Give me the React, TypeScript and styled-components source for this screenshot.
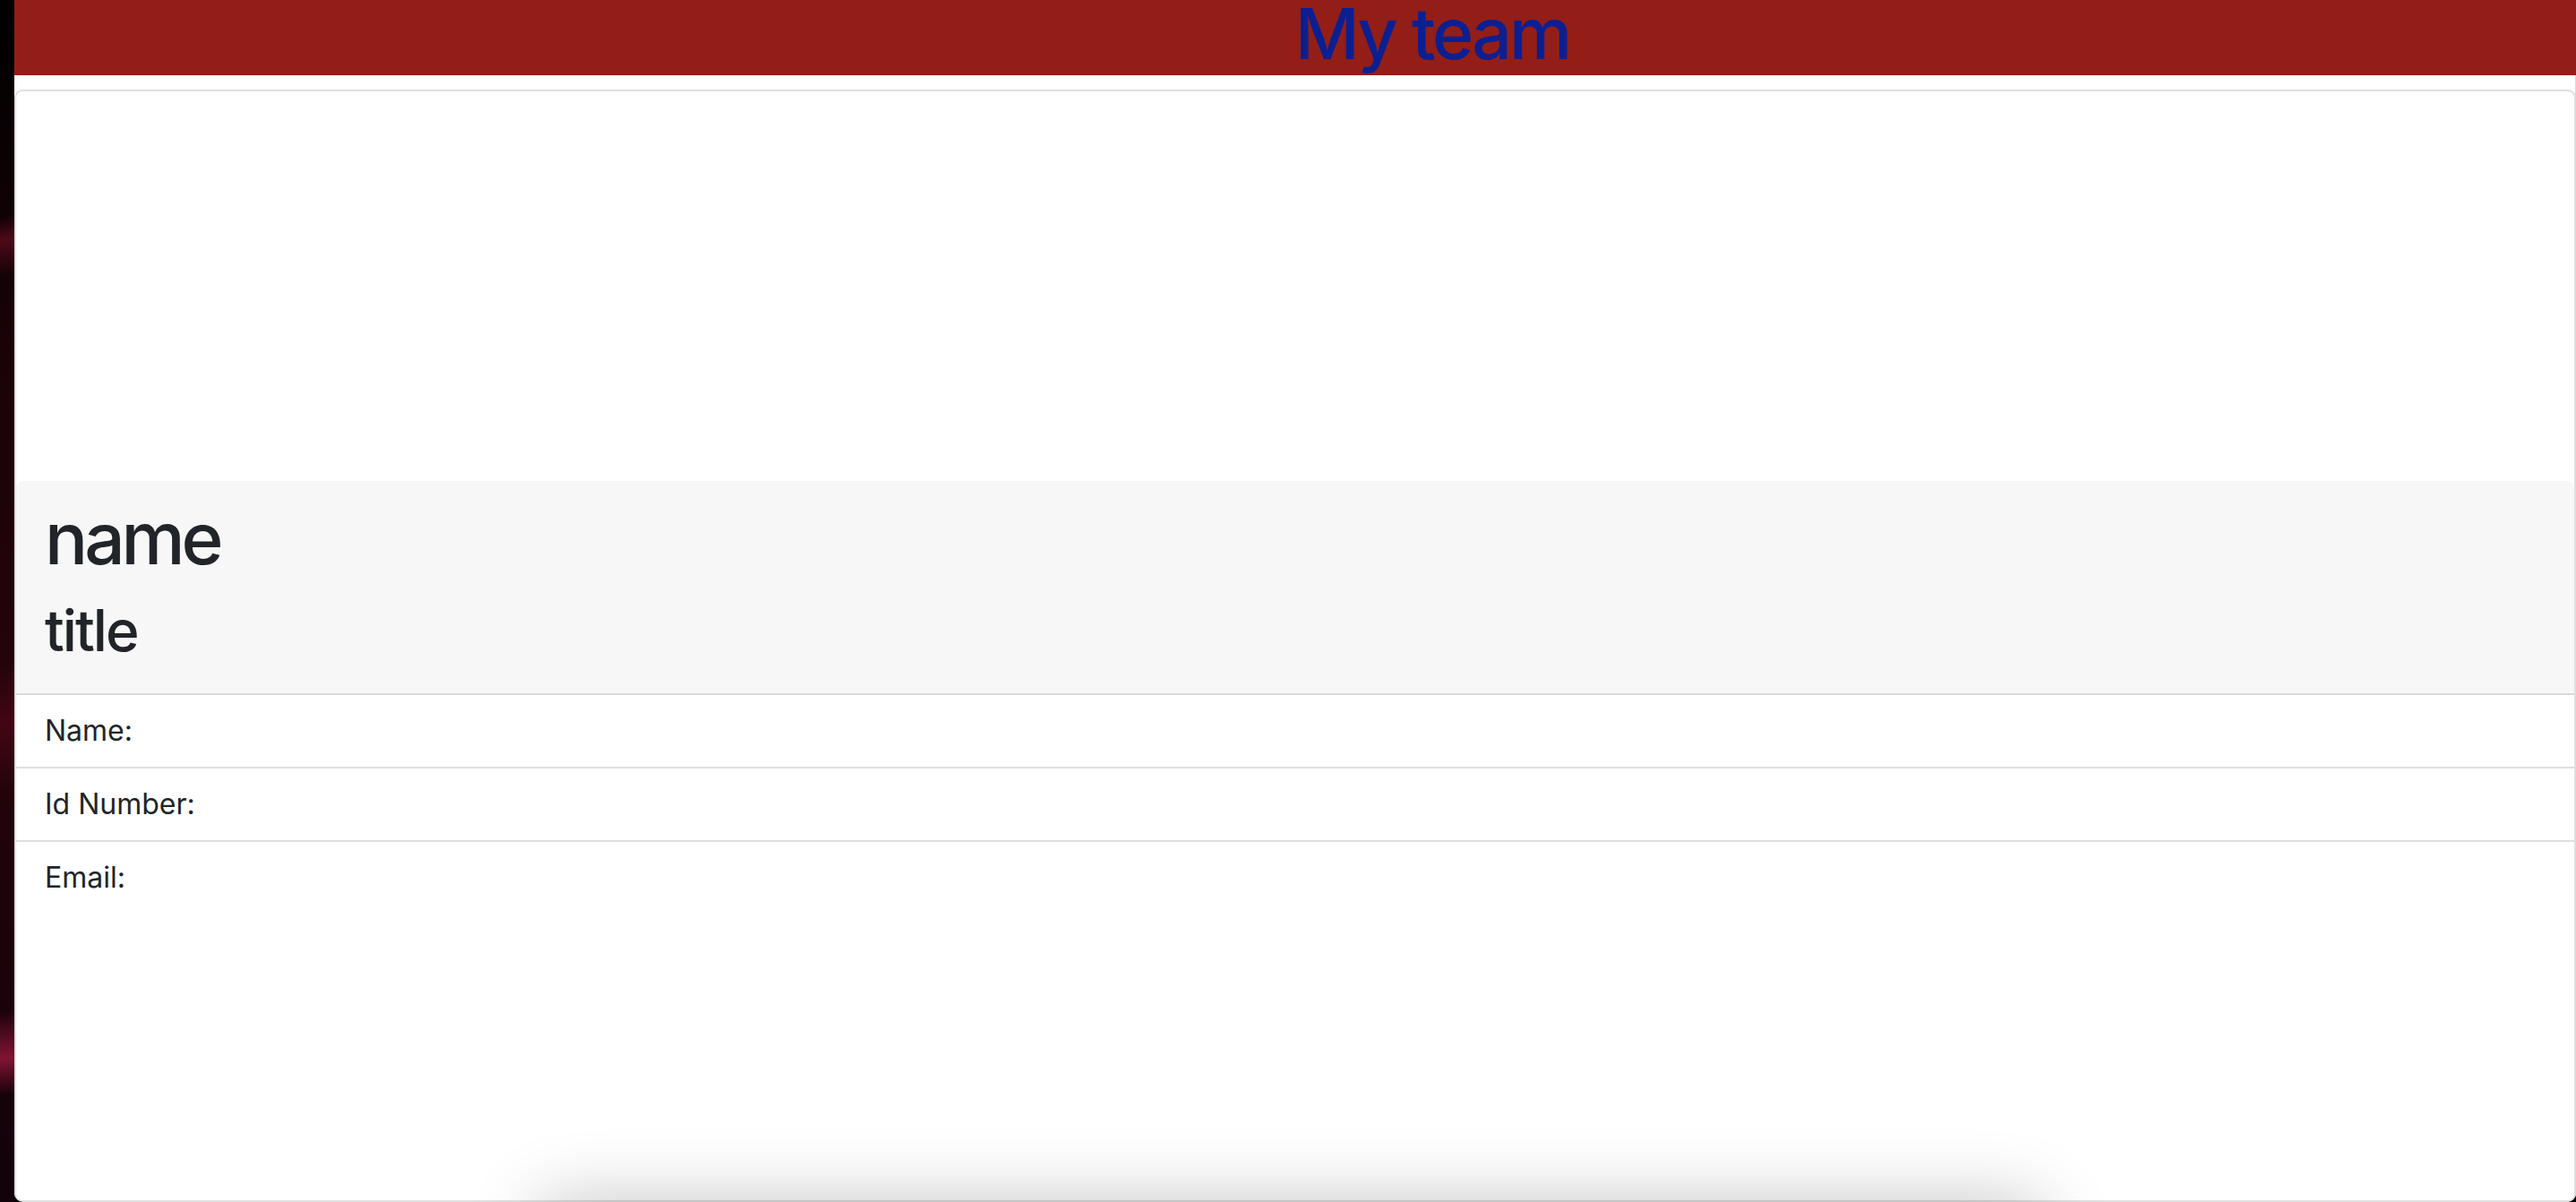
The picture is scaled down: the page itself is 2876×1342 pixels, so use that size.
import React from "react";
import styled, { createGlobalStyle } from "styled-components";

const GlobalStyle = createGlobalStyle`
  html, body {
    margin: 0;
    padding: 0;
    background: #050103;
    overflow: hidden;
  }
  * { box-sizing: border-box; }
  #root {
    font-family: Inter, "Noto Sans", "Liberation Sans", sans-serif;
    color: #212529;
  }
`;

const Desktop = styled.div`
  display: flex;
  height: 1342px;
  overflow: hidden;
`;

const Wallpaper = styled.div`
  flex: 0 0 16px;
  background:
    linear-gradient(170deg, transparent 18%, rgba(150, 20, 50, 0.45) 20%, transparent 23%),
    linear-gradient(160deg, transparent 55%, rgba(110, 10, 30, 0.4) 60%, transparent 66%),
    linear-gradient(175deg, transparent 84%, rgba(200, 30, 80, 0.6) 88%, transparent 91%),
    linear-gradient(180deg, #000 0%, #1a0307 30%, #24040a 60%, #12020a 100%);
`;

const Window = styled.div`
  position: relative;
  flex: 1;
  display: flex;
  flex-direction: column;
  background: #fff;
  border-radius: 0 0 10px 10px;
  overflow: hidden;
  box-shadow: inset -1px 0 0 #d8d8d8;
`;

const TopBar = styled.header`
  flex: 0 0 84px;
  display: flex;
  align-items: flex-start;
  justify-content: center;
  background: #921e17;
  padding: 0 0 0 306px;
`;

const BarTitle = styled.h1`
  margin: 0;
  font-size: 79px;
  line-height: 74px;
  font-weight: 500;
  color: #0c1f91;
  letter-spacing: -3px;
`;

const Content = styled.main`
  flex: 1;
  display: flex;
  flex-direction: column;
  padding-top: 16px;
`;

const Card = styled.section`
  flex: 1;
  display: flex;
  flex-direction: column;
  border: 2px solid #dfdfdf;
  border-radius: 9px;
  background: #fff;
`;

const CardImage = styled.div`
  flex: 0 0 435px;
`;

const CardHeader = styled.div`
  background: #f7f7f7;
  padding: 16px 32px;
  border-bottom: 2px solid #d9d9d9;
  border-radius: 8px 8px 0 0;
`;

const Heading = styled.h2<{ $size: number; $line: number; $track: number }>`
  margin: 0 0 16px;
  font-size: ${(p) => p.$size}px;
  line-height: ${(p) => p.$line}px;
  font-weight: 500;
  color: #212529;
  letter-spacing: ${(p) => p.$track}px;
`;

const List = styled.ul`
  list-style: none;
  margin: 0;
  padding: 0;
`;

const Item = styled.li`
  padding: 16px 32px;
  font-size: 32px;
  line-height: 48px;
  color: #212529;
  border-bottom: 2px solid #dfdfdf;
  &:last-child {
    border-bottom: none;
  }
`;

const DockShadow = styled.div`
  position: absolute;
  left: 584px;
  width: 1680px;
  top: 100%;
  height: 120px;
  border-radius: 20px;
  background: #fff;
  box-shadow: 0 0 80px rgba(0, 0, 0, 0.24);
`;

export default function App() {
  return (
    <>
      <GlobalStyle />
      <Desktop>
        <Wallpaper />
        <Window>
          <TopBar>
            <BarTitle>My team</BarTitle>
          </TopBar>
          <Content>
            <Card>
              <CardImage />
              <CardHeader>
                <Heading as="h2" $size={80} $line={96} $track={-4}>
                  name
                </Heading>
                <Heading as="h3" $size={64} $line={77} $track={-2}>
                  title
                </Heading>
              </CardHeader>
              <List>
                <Item>Name:</Item>
                <Item>Id Number:</Item>
                <Item>Email:</Item>
              </List>
            </Card>
          </Content>
          <DockShadow />
        </Window>
      </Desktop>
    </>
  );
}
